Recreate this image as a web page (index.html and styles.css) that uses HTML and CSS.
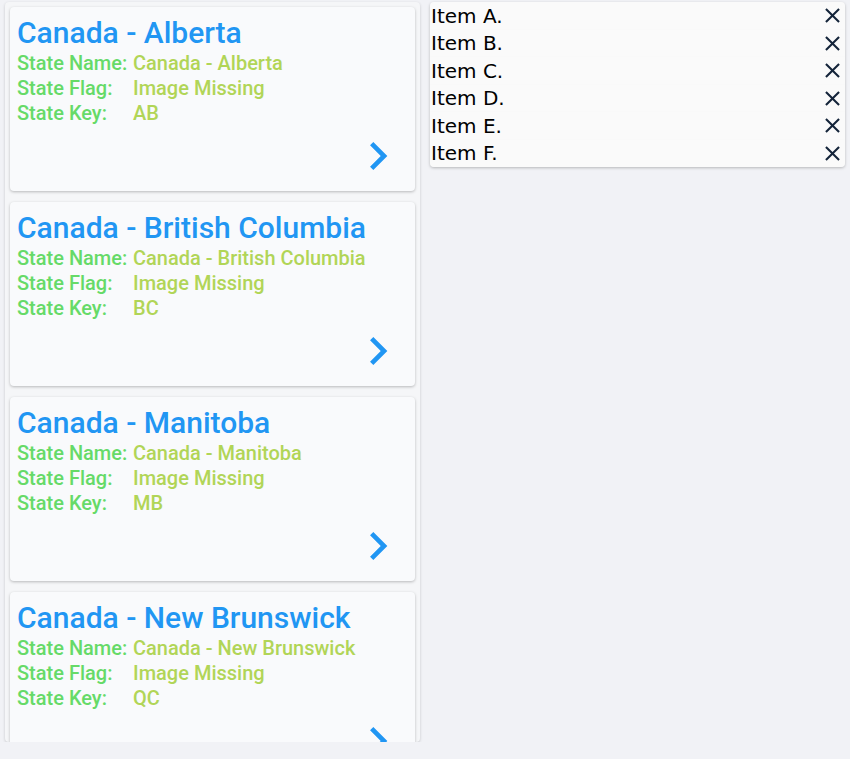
FILE: index.html
```html
<!DOCTYPE html>
<html>
<head>
<meta charset="utf-8">
<link rel="stylesheet" href="styles.css">
</head>
<body>
<div class="page">
  <div class="list-panel">
    <div class="card">
      <div class="title">Canada - Alberta</div>
      <div class="info">
        <div class="row"><span class="label">State Name:</span><span class="value">Canada - Alberta</span></div>
        <div class="row"><span class="label">State Flag:</span><span class="value">Image Missing</span></div>
        <div class="row"><span class="label">State Key:</span><span class="value">AB</span></div>
      </div>
      <div class="footer"><svg class="chev" viewBox="0 0 24 24"><path d="M10 6L8.59 7.41 13.17 12l-4.58 4.590L10 18l6-6z"/></svg></div>
    </div>
    <div class="card">
      <div class="title">Canada - British Columbia</div>
      <div class="info">
        <div class="row"><span class="label">State Name:</span><span class="value">Canada - British Columbia</span></div>
        <div class="row"><span class="label">State Flag:</span><span class="value">Image Missing</span></div>
        <div class="row"><span class="label">State Key:</span><span class="value">BC</span></div>
      </div>
      <div class="footer"><svg class="chev" viewBox="0 0 24 24"><path d="M10 6L8.59 7.41 13.17 12l-4.58 4.59L10 18l6-6z"/></svg></div>
    </div>
    <div class="card">
      <div class="title">Canada - Manitoba</div>
      <div class="info">
        <div class="row"><span class="label">State Name:</span><span class="value">Canada - Manitoba</span></div>
        <div class="row"><span class="label">State Flag:</span><span class="value">Image Missing</span></div>
        <div class="row"><span class="label">State Key:</span><span class="value">MB</span></div>
      </div>
      <div class="footer"><svg class="chev" viewBox="0 0 24 24"><path d="M10 6L8.59 7.41 13.17 12l-4.58 4.59L10 18l6-6z"/></svg></div>
    </div>
    <div class="card">
      <div class="title">Canada - New Brunswick</div>
      <div class="info">
        <div class="row"><span class="label">State Name:</span><span class="value">Canada - New Brunswick</span></div>
        <div class="row"><span class="label">State Flag:</span><span class="value">Image Missing</span></div>
        <div class="row"><span class="label">State Key:</span><span class="value">QC</span></div>
      </div>
      <div class="footer"><svg class="chev" viewBox="0 0 24 24"><path d="M10 6L8.59 7.41 13.17 12l-4.58 4.59L10 18l6-6z"/></svg></div>
    </div>
  </div>
  <div class="items-panel">
    <div class="item"><span>Item A.</span><svg class="close" viewBox="0 0 24 24"><path d="M19 6.41L17.59 5 12 10.59 6.41 5 5 6.41 10.59 12 5 17.59 6.41 19 12 13.41 17.59 19 19 17.59 13.41 12z"/></svg></div>
    <div class="item"><span>Item B.</span><svg class="close" viewBox="0 0 24 24"><path d="M19 6.41L17.59 5 12 10.59 6.41 5 5 6.41 10.59 12 5 17.59 6.41 19 12 13.41 17.59 19 19 17.59 13.41 12z"/></svg></div>
    <div class="item"><span>Item C.</span><svg class="close" viewBox="0 0 24 24"><path d="M19 6.41L17.59 5 12 10.59 6.41 5 5 6.41 10.59 12 5 17.59 6.41 19 12 13.41 17.59 19 19 17.59 13.41 12z"/></svg></div>
    <div class="item"><span>Item D.</span><svg class="close" viewBox="0 0 24 24"><path d="M19 6.41L17.59 5 12 10.59 6.41 5 5 6.41 10.59 12 5 17.59 6.41 19 12 13.41 17.59 19 19 17.59 13.41 12z"/></svg></div>
    <div class="item"><span>Item E.</span><svg class="close" viewBox="0 0 24 24"><path d="M19 6.41L17.59 5 12 10.59 6.41 5 5 6.41 10.59 12 5 17.59 6.41 19 12 13.41 17.59 19 19 17.59 13.41 12z"/></svg></div>
    <div class="item"><span>Item F.</span><svg class="close" viewBox="0 0 24 24"><path d="M19 6.41L17.59 5 12 10.59 6.41 5 5 6.41 10.59 12 5 17.59 6.41 19 12 13.41 17.59 19 19 17.59 13.41 12z"/></svg></div>
  </div>
</div>
</body>
</html>
```

FILE: styles.css
```css
html, body {
  margin: 0;
  padding: 0;
  background: #f1f2f6;
  font-family: Roboto, "Liberation Sans", sans-serif;
}

.page {
  display: flex;
  align-items: flex-start;
  gap: 10px;
  padding: 2px 5px 0 5px;
}

.list-panel {
  width: 415px;
  height: 740px;
  flex: none;
  box-sizing: border-box;
  overflow: hidden;
  background: #f5f6f8;
  border-radius: 4px;
  box-shadow: 0 1px 3px rgba(0, 0, 0, 0.18);
  padding: 5px;
  display: flex;
  flex-direction: column;
  gap: 11px;
}

.card {
  flex: none;
  height: 184px;
  box-sizing: border-box;
  background: #f9fafc;
  border-radius: 4px;
  box-shadow: 0 1px 3px rgba(0, 0, 0, 0.25);
  padding: 7px 9px 7px 7px;
  display: flex;
  flex-direction: column;
  font-weight: 500;
}

.title {
  font-size: 30px;
  line-height: 37px;
  color: #2196f3;
}

.row {
  display: flex;
  font-size: 20px;
  line-height: 25px;
}

.label {
  width: 116px;
  flex: none;
  color: #66da68;
}

.value {
  color: #b1d557;
}

.footer {
  margin-top: auto;
  display: flex;
  justify-content: flex-end;
}

.chev {
  width: 56px;
  height: 56px;
  fill: #2196f3;
  display: block;
}

.items-panel {
  width: 415px;
  flex: none;
  background: #f3f4f6;
  border-radius: 4px;
  box-shadow: 0 1px 3px rgba(0, 0, 0, 0.25);
  overflow: hidden;
  display: flex;
  flex-direction: column;
}

.item {
  height: 27.5px;
  box-sizing: border-box;
  background: #fafafa;
  box-shadow: 0 1px 2px rgba(0, 0, 0, 0.08);
  display: flex;
  align-items: center;
  justify-content: space-between;
  padding-left: 1px;
  font-family: "DejaVu Sans", sans-serif;
  font-size: 20px;
  color: #000;
}

.close {
  width: 25px;
  height: 25px;
  fill: #14243a;
  display: block;
}
```
